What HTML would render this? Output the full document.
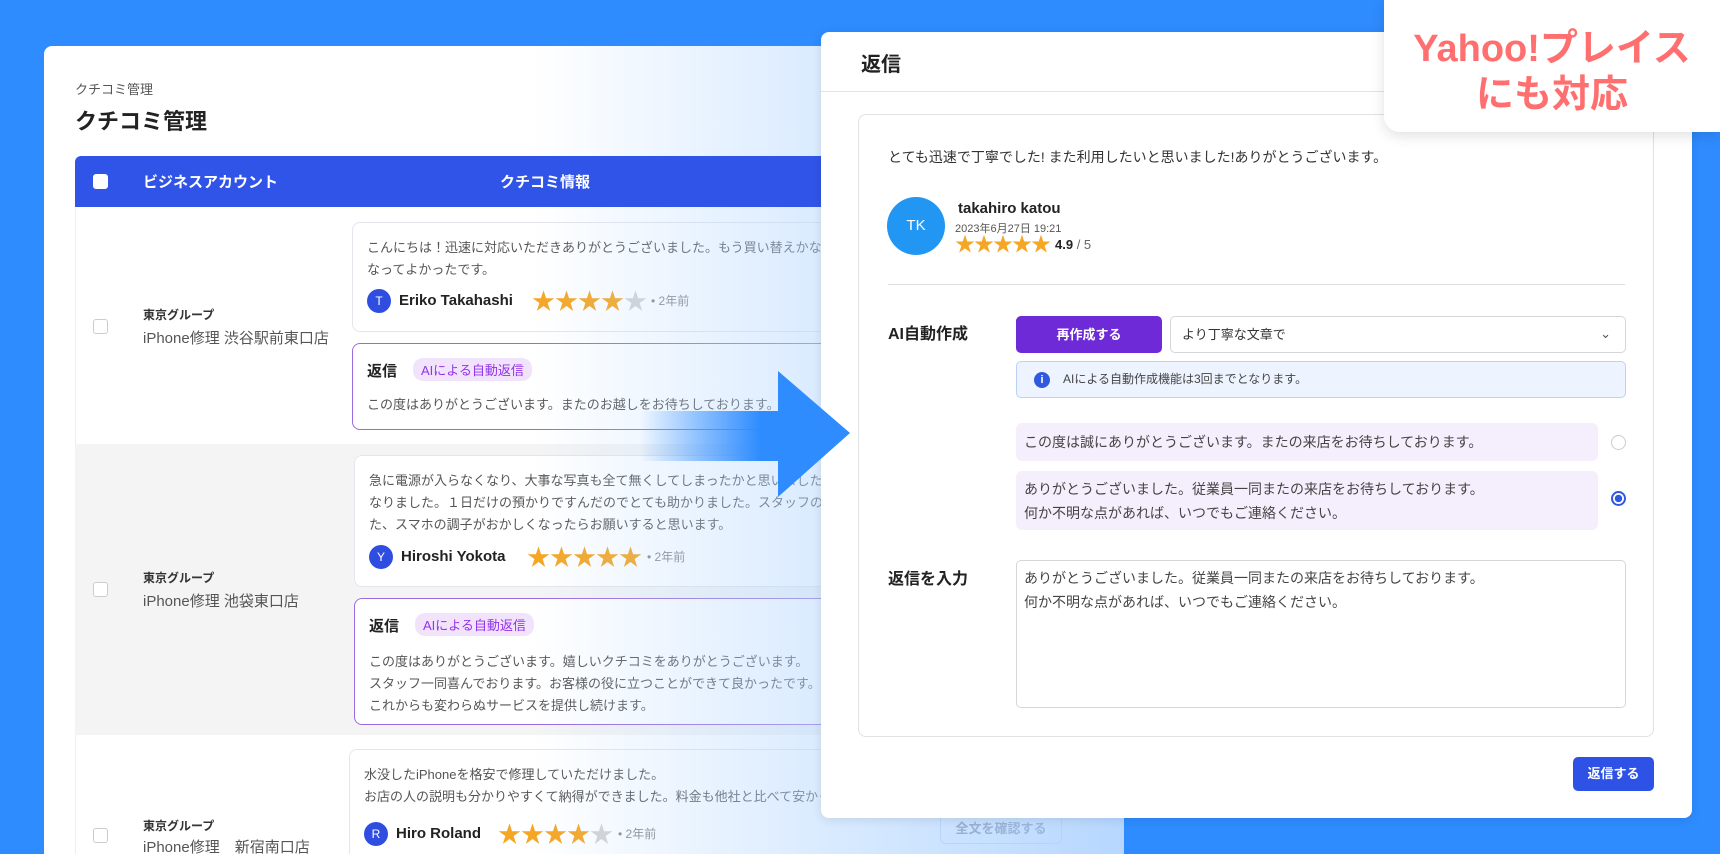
<!DOCTYPE html>
<html><head><meta charset="utf-8"><style>
*{margin:0;padding:0;box-sizing:border-box}
html,body{width:1720px;height:854px;overflow:hidden}
body{background:#2e8cff;font-family:"Liberation Sans","Noto Sans CJK JP",sans-serif;color:#333;position:relative}
.a{position:absolute}
.card{left:44px;top:46px;width:1080px;height:808px;background:#fff;border-radius:8px 8px 0 0;overflow:hidden}
.hdr{left:31px;top:110px;width:1049px;height:51px;background:#3154e8;border-radius:6px 0 0 0;color:#fff;font-weight:bold;font-size:15px;z-index:3}
.cb{width:15px;height:15px;border:1px solid #ccc;border-radius:3px;background:#fff}
.rv{background:#fff;border:1px solid #e3e6ec;border-radius:8px}
.rp{background:#fff;border:1px solid #9a6ae0;border-radius:8px}
.t13{font-size:13px;line-height:22px;color:#555}
.av{width:24px;height:24px;border-radius:50%;background:#2f4de0;color:#fff;font-size:12px;text-align:center;line-height:24px}
.nm{font-weight:bold;font-size:15px;color:#222;line-height:24px}
.st{color:#f5a623;font-size:23px;line-height:24px;letter-spacing:0}
.st i{color:#d3d3d3;font-style:normal}
.ago{font-size:12px;color:#888;line-height:24px}
.badge{background:#f2e3fd;color:#9333ea;font-size:13px;border-radius:10px;padding:2px 8px}
.acc1{font-size:12px;font-weight:bold;color:#333}
.acc2{font-size:15px;color:#555}
.modal{left:821px;top:32px;width:871px;height:786px;background:#fff;border-radius:8px;z-index:10;box-shadow:0 2px 10px rgba(0,0,0,.1)}
.m{position:absolute}
.opt{background:#f5effd;border-radius:6px;font-size:14px;line-height:24px;color:#444;padding:8px 8px}
.radio{width:15px;height:15px;border-radius:50%;border:1px solid #ccc;background:#fff}
</style></head><body>

<div class="a card">
  <div class="a" style="left:31px;top:33px;font-size:13px;color:#555">クチコミ管理</div>
  <div class="a" style="left:31px;top:58px;font-size:22px;font-weight:bold;color:#222">クチコミ管理</div>
  <div class="a hdr">
    <div class="a cb" style="left:18px;top:18px;border-color:#fff"></div>
    <div class="a" style="left:68px;top:15px">ビジネスアカウント</div>
    <div class="a" style="left:425px;top:15px">クチコミ情報</div>
  </div>
  <div class="a" style="left:31px;top:161px;width:1049px;height:237px;border-left:1px solid #eee;background:#fff"></div>
  <div class="a" style="left:31px;top:398px;width:1049px;height:291px;background:#f4f4f4"></div>
  <div class="a" style="left:31px;top:689px;width:1049px;height:119px;border-left:1px solid #eee;background:#fff"></div>

  <div class="a cb" style="left:49px;top:273px"></div>
  <div class="a acc1" style="left:99px;top:260px">東京グループ</div>
  <div class="a acc2" style="left:99px;top:281px">iPhone修理 渋谷駅前東口店</div>
  <div class="a rv" style="left:308px;top:176px;width:720px;height:110px">
    <div class="a t13" style="left:14px;top:14px;width:700px">こんにちは！迅速に対応いただきありがとうございました。もう買い替えかなと思っていたので、<br>なってよかったです。</div>
    <div class="a av" style="left:14px;top:66px">T</div>
    <div class="a nm" style="left:46px;top:66px">Eriko Takahashi</div>
    <div class="a st" style="left:179px;top:66px">★★★★<i>★</i></div>
    <div class="a ago" style="left:298px;top:66px">• 2年前</div>
  </div>
  <div class="a rp" style="left:308px;top:297px;width:720px;height:87px">
    <div class="a" style="left:14px;top:16px;font-weight:bold;font-size:15px;color:#222">返信</div>
    <div class="a badge" style="left:60px;top:14px">AIによる自動返信</div>
    <div class="a t13" style="left:14px;top:50px">この度はありがとうございます。またのお越しをお待ちしております。</div>
  </div>

  <div class="a cb" style="left:49px;top:536px"></div>
  <div class="a acc1" style="left:99px;top:523px">東京グループ</div>
  <div class="a acc2" style="left:99px;top:544px">iPhone修理 池袋東口店</div>
  <div class="a rv" style="left:310px;top:409px;width:720px;height:132px">
    <div class="a t13" style="left:14px;top:14px;width:700px;white-space:nowrap">急に電源が入らなくなり、大事な写真も全て無くしてしまったかと思いましたが、<br>なりました。１日だけの預かりですんだのでとても助かりました。スタッフの方も丁寧で、<br>た、スマホの調子がおかしくなったらお願いすると思います。</div>
    <div class="a av" style="left:14px;top:89px">Y</div>
    <div class="a nm" style="left:46px;top:89px">Hiroshi Yokota</div>
    <div class="a st" style="left:172px;top:89px">★★★★★</div>
    <div class="a ago" style="left:292px;top:89px">• 2年前</div>
  </div>
  <div class="a rp" style="left:310px;top:552px;width:720px;height:127px">
    <div class="a" style="left:14px;top:16px;font-weight:bold;font-size:15px;color:#222">返信</div>
    <div class="a badge" style="left:60px;top:14px">AIによる自動返信</div>
    <div class="a t13" style="left:14px;top:52px;white-space:nowrap">この度はありがとうございます。嬉しいクチコミをありがとうございます。<br>スタッフ一同喜んでおります。お客様の役に立つことができて良かったです。<br>これからも変わらぬサービスを提供し続けます。</div>
  </div>

  <div class="a cb" style="left:49px;top:782px"></div>
  <div class="a acc1" style="left:99px;top:771px">東京グループ</div>
  <div class="a acc2" style="left:99px;top:790px">iPhone修理　新宿南口店</div>
  <div class="a rv" style="left:305px;top:703px;width:775px;height:105px;border-bottom:none;border-radius:8px 0 0 0">
    <div class="a t13" style="left:14px;top:14px;white-space:nowrap">水没したiPhoneを格安で修理していただけました。<br>お店の人の説明も分かりやすくて納得ができました。料金も他社と比べて安かったです。</div>
    <div class="a av" style="left:14px;top:72px">R</div>
    <div class="a nm" style="left:46px;top:72px">Hiro Roland</div>
    <div class="a st" style="left:148px;top:72px">★★★★<i>★</i></div>
    <div class="a ago" style="left:268px;top:72px">• 2年前</div>
    <div class="a" style="left:590px;top:64px;width:122px;height:30px;border:1px solid #c8d8ee;border-radius:6px;font-size:13px;color:#667;text-align:center;line-height:28px;font-weight:bold">全文を確認する</div>
  </div>

  <div class="a" style="left:0;top:0;width:1080px;height:808px;background:linear-gradient(to right,rgba(200,225,255,0) 45%,rgba(180,215,255,.55) 75%,rgba(170,208,255,.85) 100%);z-index:2"></div>
</div>

<div class="a" style="left:640px;top:411px;width:142px;height:50px;background:linear-gradient(to right,rgba(46,140,255,0),#2e8cff 85%);z-index:15"></div>
<svg class="a" style="left:778px;top:371px;z-index:15" width="74" height="127"><polygon points="0,0 72,62 0,126" fill="#2e8cff"/></svg>

<div class="a modal">
  <div class="m" style="left:40px;top:16px;font-size:20px;font-weight:bold;color:#222">返信</div>
  <div class="m" style="left:0;top:59px;width:871px;height:1px;background:#e3e3e3"></div>
  <div class="m" style="left:37px;top:82px;width:796px;height:623px;border:1px solid #e2e2e2;border-radius:8px">
    <div class="m" style="left:29px;top:32px;font-size:14px;color:#333">とても迅速で丁寧でした! また利用したいと思いました!ありがとうございます。</div>
    <div class="m" style="left:28px;top:82px;width:58px;height:58px;border-radius:50%;background:#2196f3;color:#fff;font-size:15px;text-align:center;line-height:58px">TK</div>
    <div class="m" style="left:99px;top:85px;font-size:15px;font-weight:bold;color:#222">takahiro katou</div>
    <div class="m" style="left:96px;top:105px;font-size:11px;color:#555">2023年6月27日 19:21</div>
    <div class="m" style="left:96px;top:119px;font-size:20px;line-height:22px;color:#f5a623;letter-spacing:-1px">★★★★★</div>
    <div class="m" style="left:196px;top:122px;font-size:13px;color:#222"><b>4.9</b> <span style="color:#666">/ 5</span></div>
    <div class="m" style="left:29px;top:169px;width:737px;height:1px;background:#ddd"></div>
    <div class="m" style="left:29px;top:205px;font-size:16px;font-weight:bold;color:#222">AI自動作成</div>
    <div class="m" style="left:157px;top:201px;width:146px;height:37px;background:#6d2ad6;border-radius:5px;color:#fff;font-size:13px;font-weight:bold;text-align:center;line-height:37px">再作成する</div>
    <div class="m" style="left:311px;top:201px;width:456px;height:37px;border:1px solid #d6d6d6;border-radius:5px;font-size:13px;color:#333;line-height:35px;padding-left:11px">より丁寧な文章で<span style="position:absolute;right:14px;top:-1px;color:#555">⌄</span></div>
    <div class="m" style="left:157px;top:246px;width:610px;height:37px;border:1px solid #bcd2f3;background:#eef4ff;border-radius:5px;font-size:12px;color:#444;line-height:35px;padding-left:46px">
      <span style="position:absolute;left:17px;top:10px;width:16px;height:16px;border-radius:50%;background:#3159e0;color:#fff;font-size:11px;font-weight:bold;text-align:center;line-height:16px">i</span>AIによる自動作成機能は3回までとなります。</div>
    <div class="m opt" style="left:157px;top:308px;width:582px;height:38px;line-height:22px">この度は誠にありがとうございます。またの来店をお待ちしております。</div>
    <div class="m radio" style="left:752px;top:320px"></div>
    <div class="m opt" style="left:157px;top:356px;width:582px;height:59px;line-height:24px;padding-top:6px">ありがとうございました。従業員一同またの来店をお待ちしております。<br>何か不明な点があれば、いつでもご連絡ください。</div>
    <div class="m radio" style="left:752px;top:376px;border:2px solid #3159e0;background:radial-gradient(#3159e0 45%,#fff 50%)"></div>
    <div class="m" style="left:29px;top:450px;font-size:16px;font-weight:bold;color:#222">返信を入力</div>
    <div class="m" style="left:157px;top:445px;width:610px;height:148px;border:1px solid #d6d6d6;border-radius:5px;font-size:14px;line-height:24px;color:#444;padding:5px 7px">ありがとうございました。従業員一同またの来店をお待ちしております。<br>何か不明な点があれば、いつでもご連絡ください。</div>
  </div>
  <div class="m" style="left:752px;top:725px;width:81px;height:34px;background:#2f52e6;border-radius:5px;color:#fff;font-size:13px;font-weight:bold;text-align:center;line-height:34px">返信する</div>
</div>

<div class="a" style="left:1384px;top:0;width:336px;height:132px;background:#fff;border-radius:0 0 0 16px;z-index:20;box-shadow:0 4px 14px rgba(0,0,0,.12);color:#ff6f6f;font-weight:bold;font-size:38px;text-align:center;line-height:46px;padding-top:26px">Yahoo!プレイス<br>にも対応</div>
</body></html>
